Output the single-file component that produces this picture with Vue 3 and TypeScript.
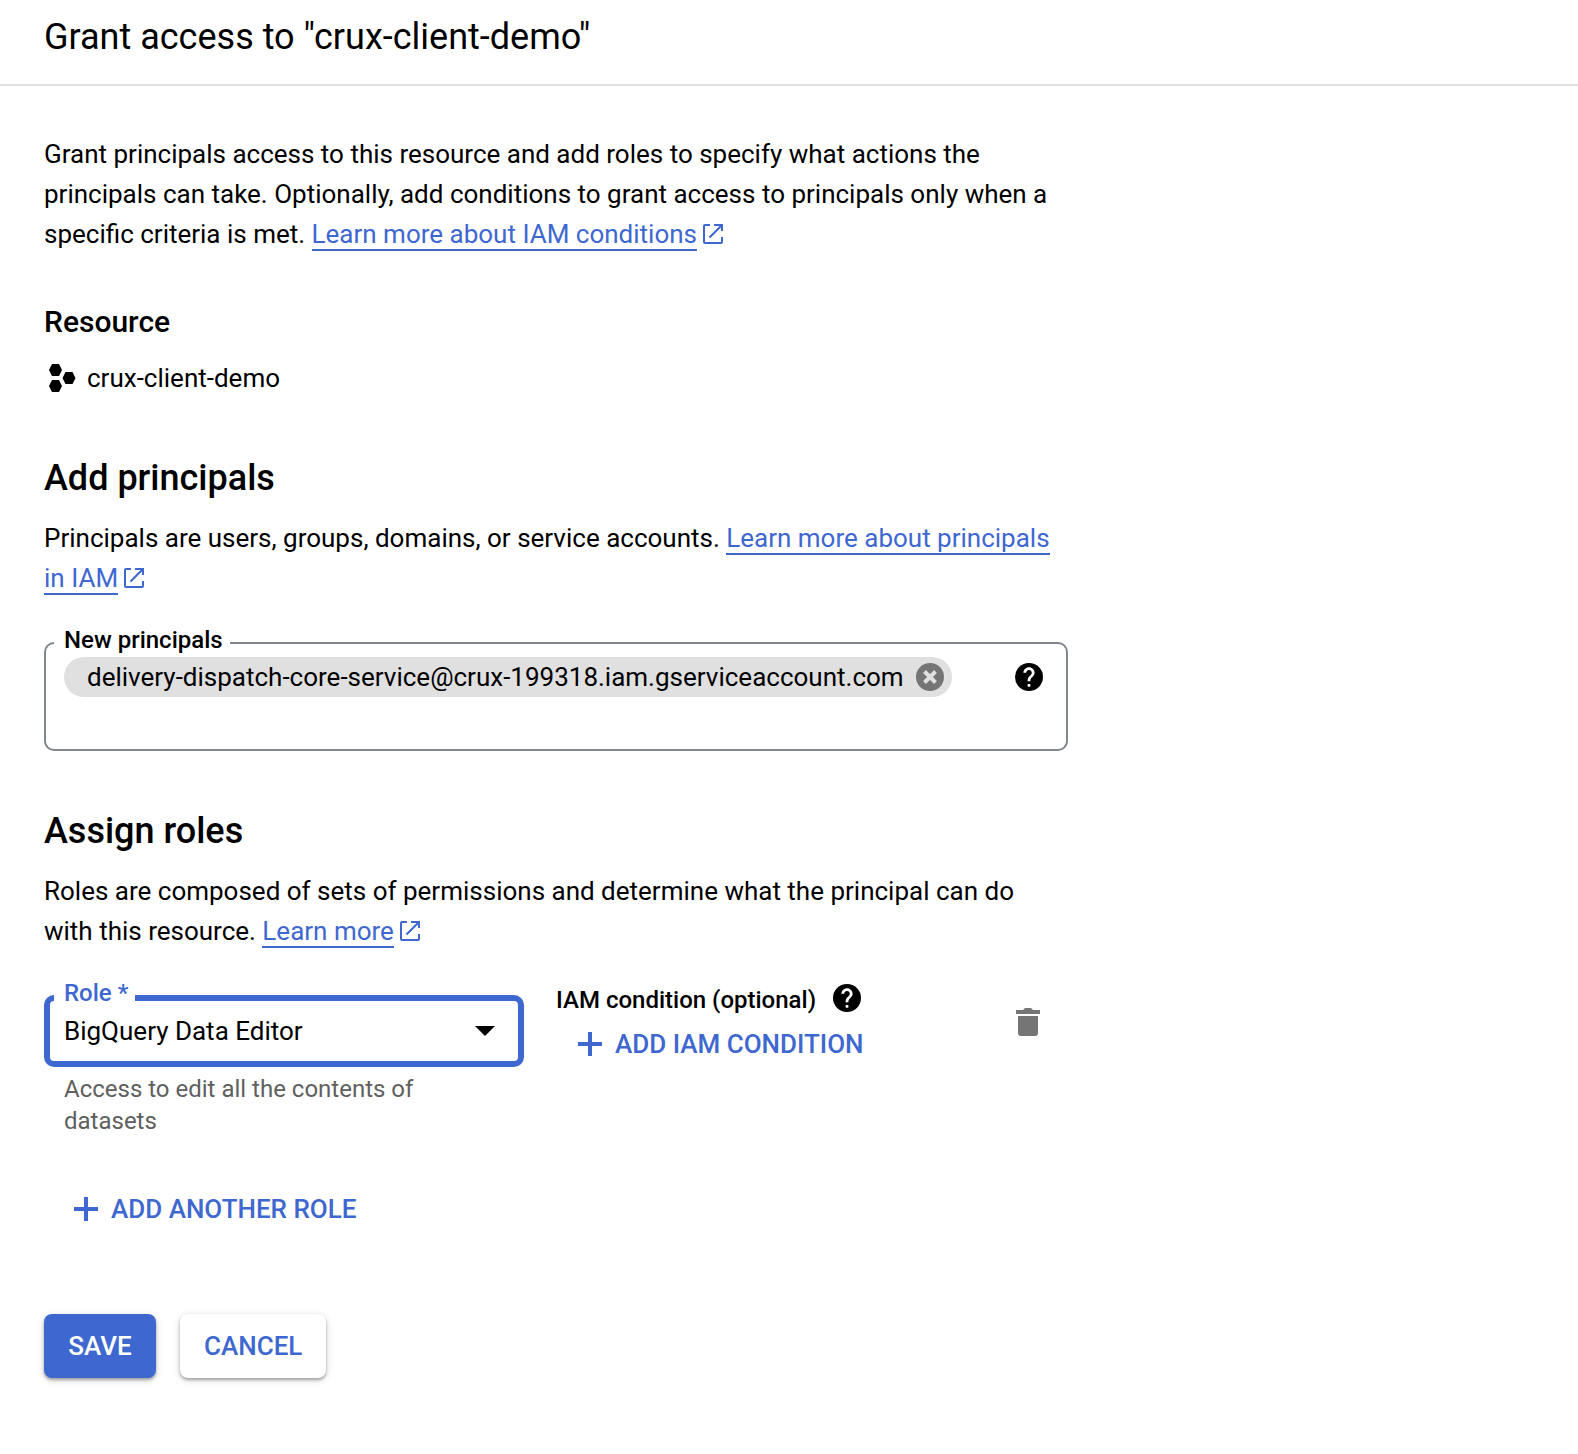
<script setup lang="ts">
import { ref } from 'vue'

const project = 'crux-client-demo'
const principals = ref<string[]>(['delivery-dispatch-core-service@crux-199318.iam.gserviceaccount.com'])
const draft = ref('')
const roles = ['BigQuery Data Editor', 'BigQuery Data Owner', 'BigQuery Data Viewer']
const role = ref(roles[0])

const externalPath = 'M7 1H2a1 1 0 0 0-1 1v16a1 1 0 0 0 1 1h16a1 1 0 0 0 1-1v-5M11 1h8v6M19 1 6.500 13.500'
const questionPath =
  'M15.070 11.250l-.9.92C13.450 12.900 13 13.500 13 15h-2v-.5c0-1.100.45-2.100 1.170-2.830l1.240-1.260c.37-.36.59-.86.59-1.410 0-1.100-.9-2-2-2s-2 .9-2 2H8c0-2.210 1.790-4 4-4s4 1.790 4 4c0 .88-.36 1.680-.93 2.250z'

function addPrincipal() {
  const value = draft.value.trim()
  if (value) principals.value.push(value)
  draft.value = ''
}

function removePrincipal(index: number) {
  principals.value.splice(index, 1)
}
</script>

<template>
  <div class="panel">
    <header class="header">
      <h1>Grant access to "{{ project }}"</h1>
    </header>

    <main class="content">
      <p class="text">
        Grant principals access to this resource and add roles to specify what actions the principals can take.
        Optionally, add conditions to grant access to principals only when a specific criteria is met.
        <a class="link" href="#conditions">Learn more about IAM conditions</a>
        <svg class="external" viewBox="0 0 20 20" aria-hidden="true"><path :d="externalPath" /></svg>
      </p>

      <h3>Resource</h3>
      <div class="resource">
        <svg class="hexes" viewBox="0 0 27 28" aria-hidden="true">
          <path d="M3 0h7l3 6-3 6H3L0 6zM3 16h7l3 6-3 6H3l-3-6zM16.500 8h7l3 6-3 6h-7l-3-6z" />
        </svg>
        <span>{{ project }}</span>
      </div>

      <h2>Add principals</h2>
      <p class="text">
        Principals are users, groups, domains, or service accounts.
        <a class="link" href="#principals">Learn more about principals in IAM</a>
        <svg class="external" viewBox="0 0 20 20" aria-hidden="true"><path :d="externalPath" /></svg>
      </p>

      <div class="field principals">
        <label class="floating" for="new-principals">New principals</label>
        <div class="box">
          <div class="entries">
            <div v-for="(name, i) in principals" :key="name" class="chip">
              <span>{{ name }}</span>
              <button type="button" class="icon-button" aria-label="Remove principal" @click="removePrincipal(i)">
                <svg class="remove" viewBox="0 0 28 28"><circle cx="14" cy="14" r="14" /><path d="m8.500 8.500 11 11M19.500 8.500l-11 11" /></svg>
              </button>
            </div>
            <input id="new-principals" v-model="draft" type="text" @keyup.enter="addPrincipal" />
          </div>
          <button type="button" class="icon-button" aria-label="Help with principals">
            <svg class="help" viewBox="2 2 20 20"><circle cx="12" cy="12" r="10" /><path :d="questionPath" /><rect x="11" y="17" width="2" height="2" rx="0.500" /></svg>
          </button>
        </div>
      </div>

      <h2>Assign roles</h2>
      <p class="text">
        Roles are composed of sets of permissions and determine what the principal can do with this resource.
        <a class="link" href="#roles">Learn more</a>
        <svg class="external" viewBox="0 0 20 20" aria-hidden="true"><path :d="externalPath" /></svg>
      </p>

      <div class="role-row">
        <div class="role">
          <div class="field active">
            <label class="floating" for="role">Role *</label>
            <div class="box">
              <select id="role" v-model="role">
                <option v-for="r in roles" :key="r">{{ r }}</option>
              </select>
              <svg class="caret" viewBox="0 0 20 10" aria-hidden="true"><path d="M0 0h20L10 10z" /></svg>
            </div>
          </div>
          <p class="hint">Access to edit all the contents of datasets</p>
        </div>

        <div class="condition">
          <div class="condition-label">
            <span>IAM condition (optional)</span>
            <button type="button" class="icon-button" aria-label="Help with IAM conditions">
              <svg class="help" viewBox="2 2 20 20"><circle cx="12" cy="12" r="10" /><path :d="questionPath" /><rect x="11" y="17" width="2" height="2" rx="0.500" /></svg>
            </button>
          </div>
          <button type="button" class="add">
            <svg class="plus" viewBox="0 0 24 24" aria-hidden="true"><path d="M12 0v24M0 12h24" /></svg>
            <span>ADD IAM CONDITION</span>
          </button>
        </div>

        <button type="button" class="icon-button delete" aria-label="Delete role">
          <svg viewBox="0 0 24 28"><path d="M2 8h20v17a3 3 0 0 1-3 3H5a3 3 0 0 1-3-3zM0 2h7l2-2h6l2 2h7v4H0z" /></svg>
        </button>
      </div>

      <button type="button" class="add another">
        <svg class="plus" viewBox="0 0 24 24" aria-hidden="true"><path d="M12 0v24M0 12h24" /></svg>
        <span>ADD ANOTHER ROLE</span>
      </button>

      <div class="actions">
        <button type="submit" class="action primary">SAVE</button>
        <button type="button" class="action">CANCEL</button>
      </div>
    </main>
  </div>
</template>

<style>
body {
  margin: 0;
  background: #fff;
}
</style>

<style scoped>
.panel {
  --blue: #3e68d0;
  color: #000;
  font: 400 26px/40px Roboto, sans-serif;
}

.panel * {
  box-sizing: border-box;
}

h1,
h2,
h3,
p {
  margin: 0;
}

h1,
h2 {
  font-size: 36px;
  line-height: 48px;
  font-weight: 400;
}

h2,
h3 {
  font-weight: 500;
}

h3 {
  margin-top: 48px;
  font-size: 30px;
  line-height: 40px;
}

h2 {
  margin: 56px 0 16px;
}

.header {
  padding: 13px 44px 23px;
  border-bottom: 2px solid #e0e0e0;
}

.content {
  max-width: 1112px;
  padding: 48px 44px 76px;
}

.link {
  color: var(--blue);
  text-decoration: none;
  border-bottom: 2px solid var(--blue);
}

.external {
  width: 20px;
  height: 20px;
  margin-left: 6px;
  vertical-align: -1px;
  fill: none;
  stroke: var(--blue);
  stroke-width: 2;
}

.resource {
  display: flex;
  align-items: center;
  gap: 11px;
  margin-top: 16px;
  padding-left: 5px;
}

.hexes {
  width: 27px;
  height: 28px;
}

button,
input,
select {
  font: inherit;
  color: inherit;
  margin: 0;
  padding: 0;
  border: 0;
  background: none;
}

button {
  cursor: pointer;
}

.field {
  position: relative;
}

.floating {
  position: absolute;
  z-index: 1;
  top: -16px;
  left: 10px;
  padding: 0 7px 0 10px;
  background: #fff;
  font-size: 24px;
  line-height: 28px;
  font-weight: 500;
}

.box {
  display: flex;
  align-items: flex-start;
  justify-content: space-between;
  border: 2px solid #80868b;
  border-radius: 10px;
}

.principals {
  margin-top: 44px;
}

.principals .box {
  padding: 13px 23px 12px 18px;
}

.principals .box > .icon-button {
  margin-top: 6px;
}

.entries {
  display: flex;
  flex-direction: column;
  align-items: flex-start;
}

.entries input {
  width: 100%;
  height: 40px;
  outline: none;
}

.chip {
  display: flex;
  align-items: center;
  gap: 12px;
  height: 40px;
  padding: 0 8px 0 23px;
  border-radius: 20px;
  background: #e0e0e0;
}

.icon-button {
  display: flex;
  flex: none;
}

.help,
.remove {
  width: 28px;
  height: 28px;
}

.help {
  fill: #fff;
}

.help circle {
  fill: #000;
}

.remove {
  fill: #757575;
}

.remove path {
  stroke: #e0e0e0;
  stroke-width: 4;
}

.role-row {
  display: flex;
  align-items: flex-start;
  margin-top: 44px;
}

.role {
  width: 480px;
}

.active .floating {
  color: var(--blue);
}

.active .box {
  position: relative;
  border: 6px solid var(--blue);
}

.active select {
  flex: 1;
  height: 60px;
  padding: 0 60px 0 14px;
  appearance: none;
  outline: none;
}

.caret {
  position: absolute;
  top: 25px;
  right: 23px;
  width: 20px;
  height: 10px;
  pointer-events: none;
}

.hint {
  margin-top: 6px;
  padding: 0 80px 0 20px;
  color: #5f5f5f;
  font-size: 24px;
  line-height: 32px;
}

.condition {
  flex: 1;
  padding-left: 32px;
}

.condition-label {
  display: flex;
  align-items: flex-start;
  gap: 17px;
  height: 28px;
  margin-top: -11px;
  font-size: 24px;
  line-height: 32px;
  font-weight: 500;
}

.add {
  display: flex;
  align-items: center;
  gap: 13px;
  margin: 12px 0 0 22px;
  color: var(--blue);
  font-weight: 500;
}

.plus {
  width: 24px;
  height: 24px;
  stroke: currentColor;
  stroke-width: 4;
}

.delete {
  margin: 13px 28px 0 0;
}

.delete svg {
  width: 24px;
  height: 28px;
  fill: #757575;
}

.another {
  margin: 52px 0 0 30px;
}

.actions {
  display: flex;
  gap: 24px;
  margin-top: 85px;
}

.action {
  min-width: 112px;
  height: 64px;
  padding: 0 24px;
  border-radius: 8px;
  background: #fff;
  color: var(--blue);
  font-weight: 500;
  box-shadow: 0 2px 3px rgba(0, 0, 0, 0.3), 0 2px 8px rgba(0, 0, 0, 0.15);
}

.action.primary {
  background: var(--blue);
  color: #fff;
}
</style>
